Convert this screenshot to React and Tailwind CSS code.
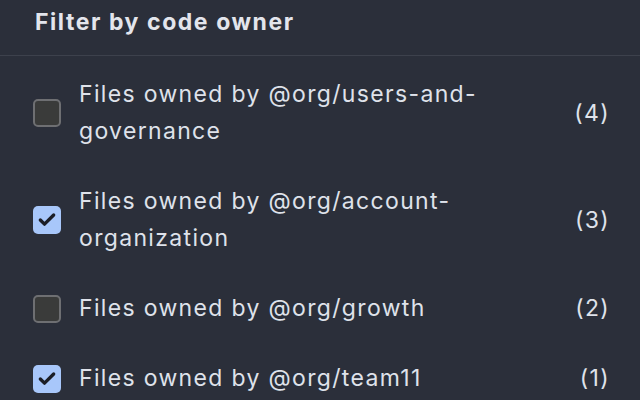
import { Check } from 'lucide-react';

const owners = [
  { name: 'Files owned by @org/users-and-governance', count: 4, checked: false },
  { name: 'Files owned by @org/account-organization', count: 3, checked: true },
  { name: 'Files owned by @org/growth', count: 2, checked: false },
  { name: 'Files owned by @org/team11', count: 1, checked: true },
];

function Checkbox({ checked }) {
  if (checked) {
    return (
      <span className="flex h-[28px] w-[28px] shrink-0 items-center justify-center rounded-[5px] bg-[#a8c7fa]">
        <Check size={20} strokeWidth={4} className="text-[#1b1e26]" />
      </span>
    );
  }
  return (
    <span className="h-[28px] w-[28px] shrink-0 rounded-[5px] border-2 border-[#6e6f72] bg-[#3a3b3a]" />
  );
}

export default function App() {
  return (
    <div className="h-[400px] w-[640px] overflow-hidden bg-[#2b2f3a] font-['Inter',sans-serif] text-[#dfe2ea]">
      <div className="h-[56px] border-b border-[#3d414c] px-[35px] pt-[6px]">
        <h2 className="text-[23px] font-bold leading-[32px] tracking-[0.068em] text-[#e3e5ec]">Filter by code owner</h2>
      </div>
      <ul className="flex flex-col gap-[33px] pt-[20px] pl-[33px] pr-[30px]">
        {owners.map((o) => (
          <li key={o.name} className="flex items-center gap-[18px]">
            <Checkbox checked={o.checked} />
            <span className="w-[420px] text-[23px] leading-[37px] tracking-[0.058em]">{o.name}</span>
            <span className="ml-auto text-[23px] leading-[37px] tracking-[0.058em]">({o.count})</span>
          </li>
        ))}
      </ul>
    </div>
  );
}
